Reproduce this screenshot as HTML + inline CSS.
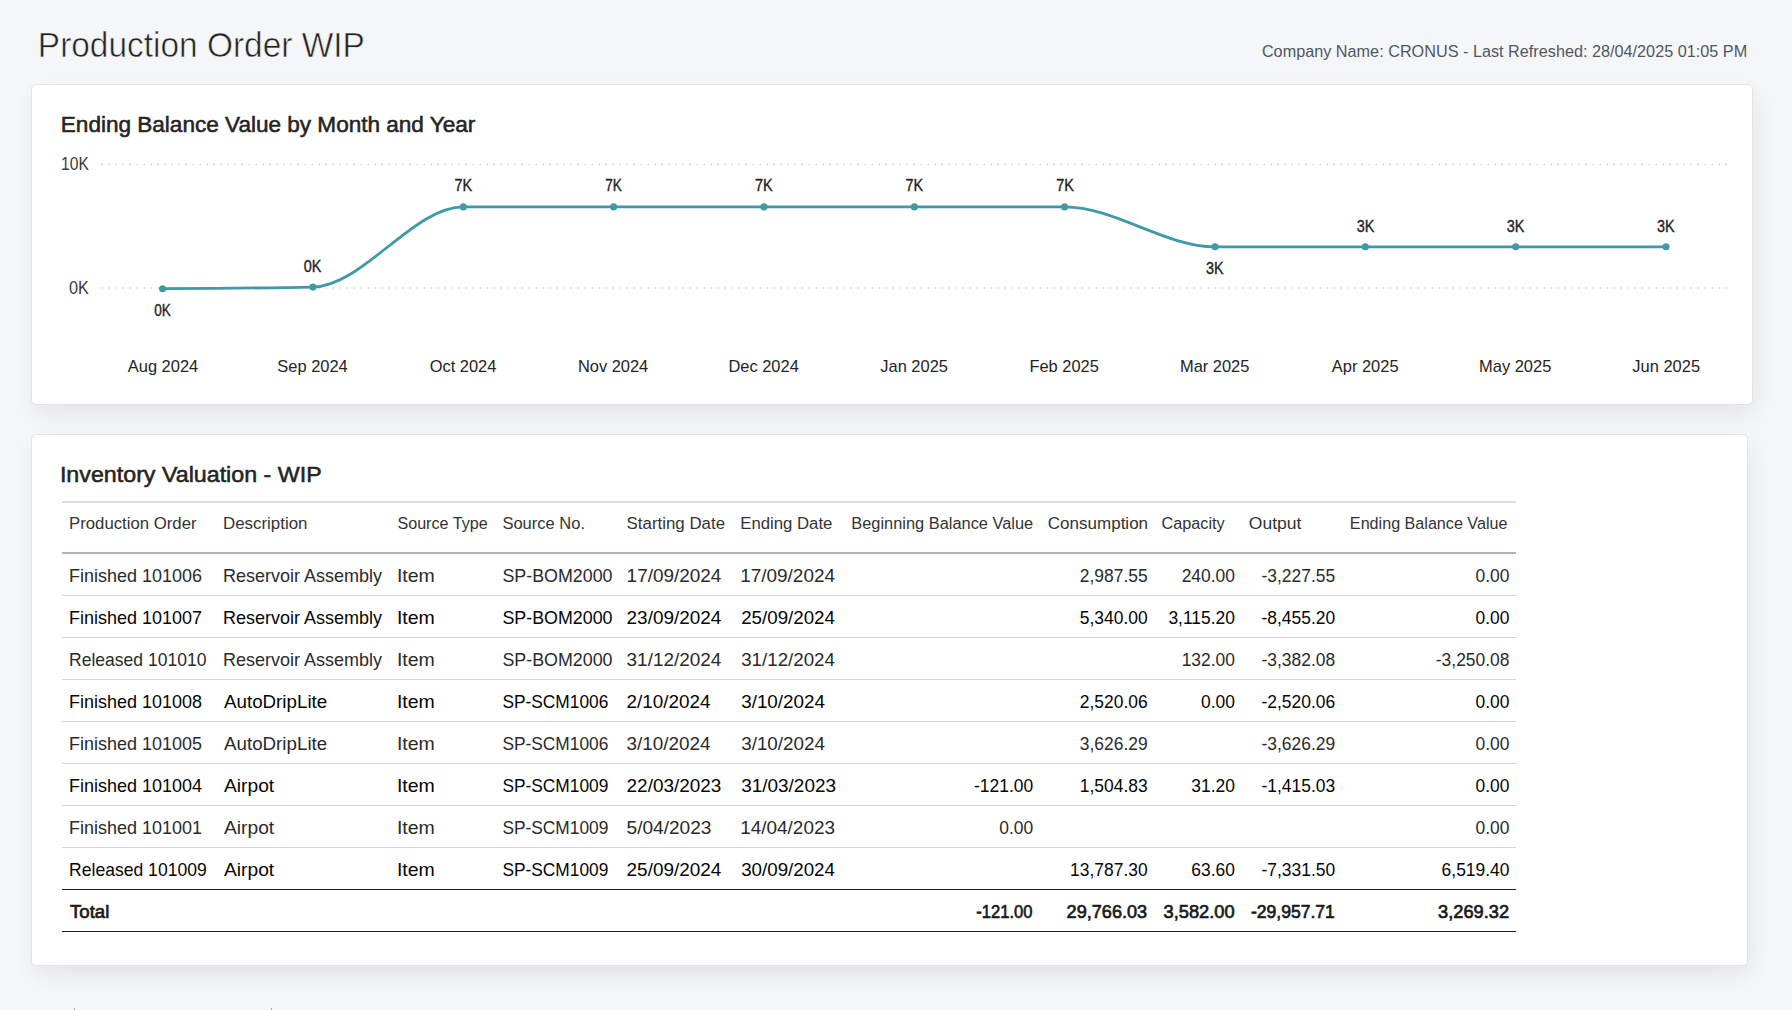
<!DOCTYPE html>
<html><head><meta charset="utf-8"><title>Production Order WIP</title>
<style>
html,body{margin:0;padding:0;}
body{width:1792px;height:1010px;overflow:hidden;background:#f5f6f8;position:relative;font-family:"Liberation Sans",sans-serif;}
.card{position:absolute;background:#fff;border:1px solid #e2e3e5;border-radius:5px;box-sizing:border-box;box-shadow:3px 10px 26px -3px rgba(0,0,0,0.085);}
.ln{position:absolute;}
svg{position:absolute;left:0;top:0;}
svg text{font-family:"Liberation Sans",sans-serif;}
</style></head>
<body>
<div class="card" style="left:31px;top:84px;width:1722px;height:321px;"></div>
<div class="card" style="left:31px;top:434px;width:1717px;height:532px;"></div>
<div class="ln" style="left:62px;top:501px;width:1454px;height:2px;background:#dcdde0;"></div>
<div class="ln" style="left:62px;top:552px;width:1454px;height:2px;background:#b0b4bb;"></div>
<div class="ln" style="left:62px;top:595px;width:1454px;height:1px;background:#d3d5d9;"></div>
<div class="ln" style="left:62px;top:637px;width:1454px;height:1px;background:#d3d5d9;"></div>
<div class="ln" style="left:62px;top:679px;width:1454px;height:1px;background:#d3d5d9;"></div>
<div class="ln" style="left:62px;top:721px;width:1454px;height:1px;background:#d3d5d9;"></div>
<div class="ln" style="left:62px;top:763px;width:1454px;height:1px;background:#d3d5d9;"></div>
<div class="ln" style="left:62px;top:805px;width:1454px;height:1px;background:#d3d5d9;"></div>
<div class="ln" style="left:62px;top:847px;width:1454px;height:1px;background:#d3d5d9;"></div>
<div class="ln" style="left:62px;top:889px;width:1454px;height:1px;background:#1e1e1e;"></div>
<div class="ln" style="left:62px;top:931px;width:1454px;height:1px;background:#1e1e1e;"></div>
<div class="ln" style="left:74px;top:1008px;width:1px;height:2px;background:#a8a8a8;"></div>
<div class="ln" style="left:271px;top:1008px;width:1px;height:2px;background:#a8a8a8;"></div>
<svg width="1792" height="1010" viewBox="0 0 1792 1010">
<line x1="101.5" y1="164.4" x2="1728" y2="164.4" stroke="#cfd1d4" stroke-width="1.5" stroke-dasharray="1.5 5.5" />
<line x1="101.5" y1="288.1" x2="1728" y2="288.1" stroke="#cfd1d4" stroke-width="1.5" stroke-dasharray="1.5 5.5" />
<path d="M162.60,288.70 C212.71,288.43 262.83,288.17 312.94,287.10 C363.05,286.03 413.17,206.90 463.28,206.90 C513.39,206.90 563.51,206.90 613.62,206.90 C663.73,206.90 713.85,206.90 763.96,206.90 C814.07,206.90 864.19,206.90 914.30,206.90 C964.41,206.90 1014.53,206.90 1064.64,206.90 C1114.75,206.90 1164.87,246.80 1214.98,246.80 C1265.09,246.80 1315.21,246.80 1365.32,246.80 C1415.43,246.80 1465.55,246.80 1515.66,246.80 C1565.77,246.80 1615.89,246.80 1666.00,246.80" fill="none" stroke="#3f9aa6" stroke-width="2.8" stroke-linecap="round" />
<circle cx="162.60" cy="288.70" r="3.55" fill="#3f9aa6" />
<circle cx="312.94" cy="287.10" r="3.55" fill="#3f9aa6" />
<circle cx="463.28" cy="206.90" r="3.55" fill="#3f9aa6" />
<circle cx="613.62" cy="206.90" r="3.55" fill="#3f9aa6" />
<circle cx="763.96" cy="206.90" r="3.55" fill="#3f9aa6" />
<circle cx="914.30" cy="206.90" r="3.55" fill="#3f9aa6" />
<circle cx="1064.64" cy="206.90" r="3.55" fill="#3f9aa6" />
<circle cx="1214.98" cy="246.80" r="3.55" fill="#3f9aa6" />
<circle cx="1365.32" cy="246.80" r="3.55" fill="#3f9aa6" />
<circle cx="1515.66" cy="246.80" r="3.55" fill="#3f9aa6" />
<circle cx="1666.00" cy="246.80" r="3.55" fill="#3f9aa6" />
<text transform="translate(37.85 56.80) scale(0.9705 1)" font-size="34.45" stroke="#f5f6f8" stroke-width="0.6" stroke-linejoin="round" fill="#252423">Production Order WIP</text>
<text transform="translate(1261.90 56.90) scale(0.9387 1)" font-size="17.30" fill="#505660">Company Name: CRONUS - Last Refreshed: 28/04/2025 01:05 PM</text>
<text transform="translate(60.80 132.00) scale(1.0014 1)" font-size="22.53" stroke="#252423" stroke-width="0.55" fill="#252423">Ending Balance Value by Month and Year</text>
<text transform="translate(61.11 170.00) scale(0.8953 1)" font-size="17.44" fill="#3b3b3b">10K</text>
<text transform="translate(68.88 294.00) scale(0.9329 1)" font-size="17.44" fill="#3b3b3b">0K</text>
<text transform="translate(127.80 371.70) scale(0.9677 1)" font-size="17.01" fill="#252423">Aug 2024</text>
<text transform="translate(277.32 371.70) scale(0.9677 1)" font-size="17.01" fill="#252423">Sep 2024</text>
<text transform="translate(429.68 371.70) scale(0.9677 1)" font-size="17.01" fill="#252423">Oct 2024</text>
<text transform="translate(577.88 371.70) scale(0.9677 1)" font-size="17.01" fill="#252423">Nov 2024</text>
<text transform="translate(728.40 371.70) scale(0.9677 1)" font-size="17.01" fill="#252423">Dec 2024</text>
<text transform="translate(880.27 371.70) scale(0.9677 1)" font-size="17.01" fill="#252423">Jan 2025</text>
<text transform="translate(1029.40 371.70) scale(0.9677 1)" font-size="17.01" fill="#252423">Feb 2025</text>
<text transform="translate(1179.93 371.70) scale(0.9677 1)" font-size="17.01" fill="#252423">Mar 2025</text>
<text transform="translate(1331.80 371.70) scale(0.9677 1)" font-size="17.01" fill="#252423">Apr 2025</text>
<text transform="translate(1479.09 371.70) scale(0.9677 1)" font-size="17.01" fill="#252423">May 2025</text>
<text transform="translate(1632.37 371.70) scale(0.9677 1)" font-size="17.01" fill="#252423">Jun 2025</text>
<text transform="translate(154.20 316.10) scale(0.8585 1)" font-size="15.84" stroke="#252423" stroke-width="0.35" fill="#252423">0K</text>
<text transform="translate(303.84 271.70) scale(0.9121 1)" font-size="15.84" stroke="#252423" stroke-width="0.35" fill="#252423">0K</text>
<text transform="translate(454.55 190.80) scale(0.9121 1)" font-size="15.84" stroke="#252423" stroke-width="0.35" fill="#252423">7K</text>
<text transform="translate(605.24 190.80) scale(0.8585 1)" font-size="15.84" stroke="#252423" stroke-width="0.35" fill="#252423">7K</text>
<text transform="translate(754.89 190.80) scale(0.9121 1)" font-size="15.84" stroke="#252423" stroke-width="0.35" fill="#252423">7K</text>
<text transform="translate(905.59 190.80) scale(0.9121 1)" font-size="15.84" stroke="#252423" stroke-width="0.35" fill="#252423">7K</text>
<text transform="translate(1056.23 190.80) scale(0.9121 1)" font-size="15.84" stroke="#252423" stroke-width="0.35" fill="#252423">7K</text>
<text transform="translate(1205.93 273.80) scale(0.9121 1)" font-size="15.84" stroke="#252423" stroke-width="0.35" fill="#252423">3K</text>
<text transform="translate(1356.63 232.10) scale(0.9121 1)" font-size="15.84" stroke="#252423" stroke-width="0.35" fill="#252423">3K</text>
<text transform="translate(1506.77 232.10) scale(0.9121 1)" font-size="15.84" stroke="#252423" stroke-width="0.35" fill="#252423">3K</text>
<text transform="translate(1656.97 232.10) scale(0.9121 1)" font-size="15.84" stroke="#252423" stroke-width="0.35" fill="#252423">3K</text>
<text transform="translate(59.92 481.90) scale(1.0424 1)" font-size="22.31" stroke="#252423" stroke-width="0.55" fill="#252423">Inventory Valuation - WIP</text>
<text transform="translate(69.03 528.90) scale(0.9692 1)" font-size="17.30" fill="#333333">Production Order</text>
<text transform="translate(223.02 528.90) scale(0.9761 1)" font-size="17.30" fill="#333333">Description</text>
<text transform="translate(397.39 528.90) scale(0.9336 1)" font-size="17.30" fill="#333333">Source Type</text>
<text transform="translate(502.39 528.90) scale(0.9554 1)" font-size="17.30" fill="#333333">Source No.</text>
<text transform="translate(626.58 528.90) scale(0.9758 1)" font-size="17.30" fill="#333333">Starting Date</text>
<text transform="translate(740.23 528.90) scale(0.9690 1)" font-size="17.30" fill="#333333">Ending Date</text>
<text transform="translate(851.25 528.90) scale(0.9483 1)" font-size="17.30" fill="#333333">Beginning Balance Value</text>
<text transform="translate(1047.79 528.90) scale(0.9842 1)" font-size="17.30" fill="#333333">Consumption</text>
<text transform="translate(1161.58 528.90) scale(0.9383 1)" font-size="17.30" fill="#333333">Capacity</text>
<text transform="translate(1248.77 528.90) scale(1.0147 1)" font-size="17.30" fill="#333333">Output</text>
<text transform="translate(1349.87 528.90) scale(0.9332 1)" font-size="17.30" fill="#333333">Ending Balance Value</text>
<text transform="translate(69.04 581.90) scale(0.9590 1)" font-size="18.75" fill="#2a2a2a">Finished 101006</text>
<text transform="translate(223.04 581.90) scale(0.9608 1)" font-size="18.75" fill="#2a2a2a">Reservoir Assembly</text>
<text transform="translate(396.93 581.90) scale(1.0399 1)" font-size="18.75" fill="#2a2a2a">Item</text>
<text transform="translate(502.39 581.90) scale(0.9528 1)" font-size="18.75" fill="#2a2a2a">SP-BOM2000</text>
<text transform="translate(626.59 581.90) scale(1.0107 1)" font-size="18.75" fill="#2a2a2a">17/09/2024</text>
<text transform="translate(740.19 581.90) scale(1.0107 1)" font-size="18.75" fill="#2a2a2a">17/09/2024</text>
<text transform="translate(1079.82 581.90) scale(0.9300 1)" font-size="18.75" fill="#2a2a2a">2,987.55</text>
<text transform="translate(1181.66 581.90) scale(0.9300 1)" font-size="18.75" fill="#2a2a2a">240.00</text>
<text transform="translate(1261.51 581.90) scale(0.9300 1)" font-size="18.75" fill="#2a2a2a">-3,227.55</text>
<text transform="translate(1475.56 581.90) scale(0.9300 1)" font-size="18.75" fill="#2a2a2a">0.00</text>
<text transform="translate(69.04 623.90) scale(0.9590 1)" font-size="18.75" fill="#050505">Finished 101007</text>
<text transform="translate(223.04 623.90) scale(0.9608 1)" font-size="18.75" fill="#050505">Reservoir Assembly</text>
<text transform="translate(396.93 623.90) scale(1.0399 1)" font-size="18.75" fill="#050505">Item</text>
<text transform="translate(502.39 623.90) scale(0.9528 1)" font-size="18.75" fill="#050505">SP-BOM2000</text>
<text transform="translate(626.58 623.90) scale(1.0107 1)" font-size="18.75" fill="#050505">23/09/2024</text>
<text transform="translate(741.20 623.90) scale(0.9999 1)" font-size="18.75" fill="#050505">25/09/2024</text>
<text transform="translate(1079.82 623.90) scale(0.9300 1)" font-size="18.75" fill="#050505">5,340.00</text>
<text transform="translate(1168.42 623.90) scale(0.9300 1)" font-size="18.75" fill="#050505">3,115.20</text>
<text transform="translate(1261.51 623.90) scale(0.9300 1)" font-size="18.75" fill="#050505">-8,455.20</text>
<text transform="translate(1475.56 623.90) scale(0.9300 1)" font-size="18.75" fill="#050505">0.00</text>
<text transform="translate(69.06 665.90) scale(0.9356 1)" font-size="18.75" fill="#2a2a2a">Released 101010</text>
<text transform="translate(223.04 665.90) scale(0.9608 1)" font-size="18.75" fill="#2a2a2a">Reservoir Assembly</text>
<text transform="translate(396.93 665.90) scale(1.0399 1)" font-size="18.75" fill="#2a2a2a">Item</text>
<text transform="translate(502.39 665.90) scale(0.9528 1)" font-size="18.75" fill="#2a2a2a">SP-BOM2000</text>
<text transform="translate(626.58 665.90) scale(1.0107 1)" font-size="18.75" fill="#2a2a2a">31/12/2024</text>
<text transform="translate(741.20 665.90) scale(0.9999 1)" font-size="18.75" fill="#2a2a2a">31/12/2024</text>
<text transform="translate(1181.66 665.90) scale(0.9300 1)" font-size="18.75" fill="#2a2a2a">132.00</text>
<text transform="translate(1261.51 665.90) scale(0.9300 1)" font-size="18.75" fill="#2a2a2a">-3,382.08</text>
<text transform="translate(1435.81 665.90) scale(0.9300 1)" font-size="18.75" fill="#2a2a2a">-3,250.08</text>
<text transform="translate(69.04 707.90) scale(0.9590 1)" font-size="18.75" fill="#050505">Finished 101008</text>
<text transform="translate(224.00 707.90) scale(1.0005 1)" font-size="18.75" fill="#050505">AutoDripLite</text>
<text transform="translate(396.93 707.90) scale(1.0399 1)" font-size="18.75" fill="#050505">Item</text>
<text transform="translate(502.39 707.90) scale(0.9247 1)" font-size="18.75" fill="#050505">SP-SCM1006</text>
<text transform="translate(626.59 707.90) scale(1.0051 1)" font-size="18.75" fill="#050505">2/10/2024</text>
<text transform="translate(741.20 707.90) scale(1.0051 1)" font-size="18.75" fill="#050505">3/10/2024</text>
<text transform="translate(1079.82 707.90) scale(0.9300 1)" font-size="18.75" fill="#050505">2,520.06</text>
<text transform="translate(1201.06 707.90) scale(0.9300 1)" font-size="18.75" fill="#050505">0.00</text>
<text transform="translate(1261.51 707.90) scale(0.9300 1)" font-size="18.75" fill="#050505">-2,520.06</text>
<text transform="translate(1475.56 707.90) scale(0.9300 1)" font-size="18.75" fill="#050505">0.00</text>
<text transform="translate(69.04 749.90) scale(0.9590 1)" font-size="18.75" fill="#2a2a2a">Finished 101005</text>
<text transform="translate(224.00 749.90) scale(1.0005 1)" font-size="18.75" fill="#2a2a2a">AutoDripLite</text>
<text transform="translate(396.93 749.90) scale(1.0399 1)" font-size="18.75" fill="#2a2a2a">Item</text>
<text transform="translate(502.39 749.90) scale(0.9247 1)" font-size="18.75" fill="#2a2a2a">SP-SCM1006</text>
<text transform="translate(626.59 749.90) scale(1.0051 1)" font-size="18.75" fill="#2a2a2a">3/10/2024</text>
<text transform="translate(741.20 749.90) scale(1.0051 1)" font-size="18.75" fill="#2a2a2a">3/10/2024</text>
<text transform="translate(1079.82 749.90) scale(0.9300 1)" font-size="18.75" fill="#2a2a2a">3,626.29</text>
<text transform="translate(1261.51 749.90) scale(0.9300 1)" font-size="18.75" fill="#2a2a2a">-3,626.29</text>
<text transform="translate(1475.56 749.90) scale(0.9300 1)" font-size="18.75" fill="#2a2a2a">0.00</text>
<text transform="translate(69.04 791.90) scale(0.9590 1)" font-size="18.75" fill="#050505">Finished 101004</text>
<text transform="translate(224.00 791.90) scale(1.0251 1)" font-size="18.75" fill="#050505">Airpot</text>
<text transform="translate(396.93 791.90) scale(1.0399 1)" font-size="18.75" fill="#050505">Item</text>
<text transform="translate(502.39 791.90) scale(0.9247 1)" font-size="18.75" fill="#050505">SP-SCM1009</text>
<text transform="translate(626.58 791.90) scale(1.0107 1)" font-size="18.75" fill="#050505">22/03/2023</text>
<text transform="translate(741.19 791.90) scale(1.0107 1)" font-size="18.75" fill="#050505">31/03/2023</text>
<text transform="translate(974.06 791.90) scale(0.9300 1)" font-size="18.75" fill="#050505">-121.00</text>
<text transform="translate(1079.82 791.90) scale(0.9300 1)" font-size="18.75" fill="#050505">1,504.83</text>
<text transform="translate(1191.36 791.90) scale(0.9300 1)" font-size="18.75" fill="#050505">31.20</text>
<text transform="translate(1261.51 791.90) scale(0.9300 1)" font-size="18.75" fill="#050505">-1,415.03</text>
<text transform="translate(1475.56 791.90) scale(0.9300 1)" font-size="18.75" fill="#050505">0.00</text>
<text transform="translate(69.04 833.90) scale(0.9590 1)" font-size="18.75" fill="#2a2a2a">Finished 101001</text>
<text transform="translate(224.00 833.90) scale(1.0251 1)" font-size="18.75" fill="#2a2a2a">Airpot</text>
<text transform="translate(396.93 833.90) scale(1.0399 1)" font-size="18.75" fill="#2a2a2a">Item</text>
<text transform="translate(502.39 833.90) scale(0.9247 1)" font-size="18.75" fill="#2a2a2a">SP-SCM1009</text>
<text transform="translate(626.57 833.90) scale(1.0175 1)" font-size="18.75" fill="#2a2a2a">5/04/2023</text>
<text transform="translate(740.19 833.90) scale(1.0107 1)" font-size="18.75" fill="#2a2a2a">14/04/2023</text>
<text transform="translate(999.26 833.90) scale(0.9300 1)" font-size="18.75" fill="#2a2a2a">0.00</text>
<text transform="translate(1475.56 833.90) scale(0.9300 1)" font-size="18.75" fill="#2a2a2a">0.00</text>
<text transform="translate(69.06 875.90) scale(0.9370 1)" font-size="18.75" fill="#050505">Released 101009</text>
<text transform="translate(224.00 875.90) scale(1.0251 1)" font-size="18.75" fill="#050505">Airpot</text>
<text transform="translate(396.93 875.90) scale(1.0399 1)" font-size="18.75" fill="#050505">Item</text>
<text transform="translate(502.39 875.90) scale(0.9247 1)" font-size="18.75" fill="#050505">SP-SCM1009</text>
<text transform="translate(626.58 875.90) scale(1.0107 1)" font-size="18.75" fill="#050505">25/09/2024</text>
<text transform="translate(741.20 875.90) scale(0.9999 1)" font-size="18.75" fill="#050505">30/09/2024</text>
<text transform="translate(1070.12 875.90) scale(0.9300 1)" font-size="18.75" fill="#050505">13,787.30</text>
<text transform="translate(1191.36 875.90) scale(0.9300 1)" font-size="18.75" fill="#050505">63.60</text>
<text transform="translate(1261.51 875.90) scale(0.9300 1)" font-size="18.75" fill="#050505">-7,331.50</text>
<text transform="translate(1441.62 875.90) scale(0.9300 1)" font-size="18.75" fill="#050505">6,519.40</text>
<text transform="translate(70.00 917.90) scale(0.9943 1)" font-size="18.75" stroke="#1a1a1a" stroke-width="0.7" fill="#1a1a1a">Total</text>
<text transform="translate(976.30 917.90) scale(0.8834 1)" font-size="18.75" stroke="#1a1a1a" stroke-width="0.7" fill="#1a1a1a">-121.00</text>
<text transform="translate(1066.60 917.90) scale(0.9665 1)" font-size="18.75" stroke="#1a1a1a" stroke-width="0.7" fill="#1a1a1a">29,766.03</text>
<text transform="translate(1163.49 917.90) scale(0.9759 1)" font-size="18.75" stroke="#1a1a1a" stroke-width="0.7" fill="#1a1a1a">3,582.00</text>
<text transform="translate(1250.90 917.90) scale(0.9369 1)" font-size="18.75" stroke="#1a1a1a" stroke-width="0.7" fill="#1a1a1a">-29,957.71</text>
<text transform="translate(1438.10 917.90) scale(0.9730 1)" font-size="18.75" stroke="#1a1a1a" stroke-width="0.7" fill="#1a1a1a">3,269.32</text>
</svg>
</body></html>
